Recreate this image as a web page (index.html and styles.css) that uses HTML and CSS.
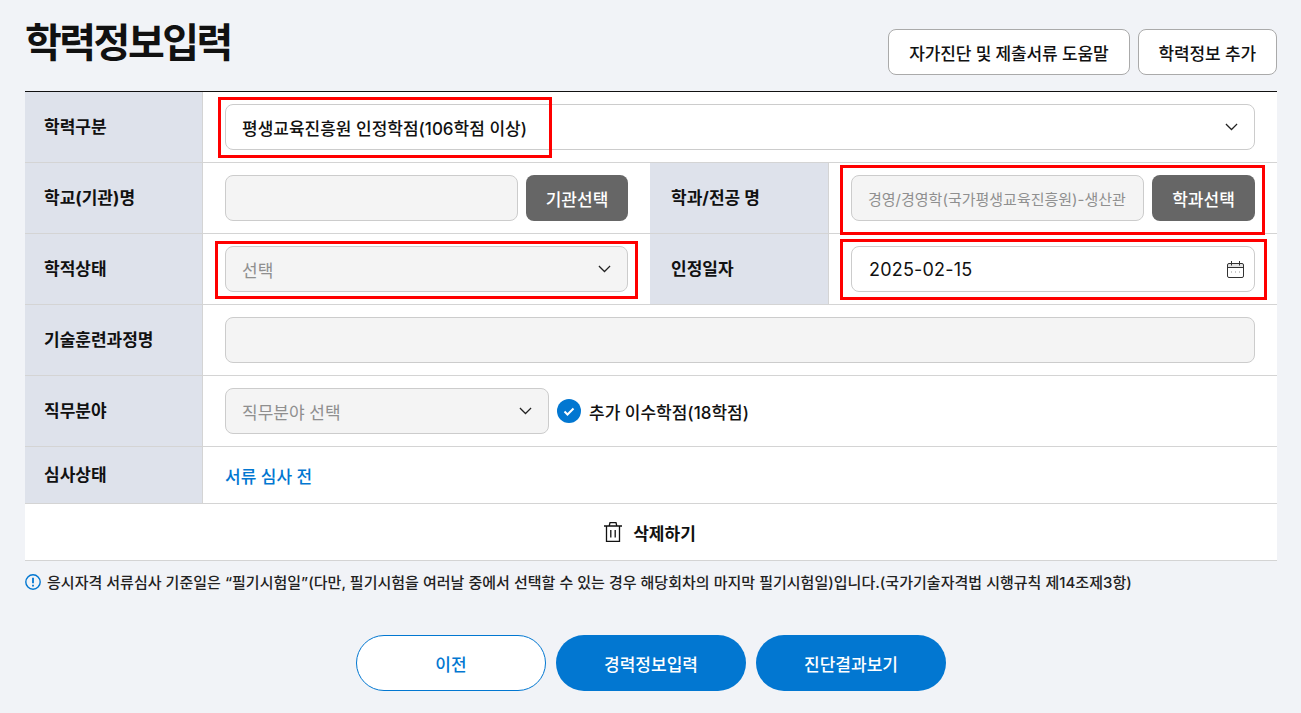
FILE: index.html
```html
<!DOCTYPE html>
<html lang="ko">
<head>
<meta charset="utf-8">
<title>학력정보입력</title>
<link rel="stylesheet" href="styles.css">
</head>
<body>
<main class="page">
  <header class="head">
    <h1 class="title">학력정보입력</h1>
    <div class="head-btns">
      <button class="btn-line">자가진단 및 제출서류 도움말</button>
      <button class="btn-line">학력정보 추가</button>
    </div>
  </header>

  <section class="table">
    <div class="row row-a">
      <div class="th">학력구분</div>
      <div class="td td-wide">
        <div class="field select white flex1 dark">평생교육진흥원 인정학점(106학점 이상)
          <svg class="chev" viewBox="0 0 14 8"><path d="M1 1l6 6 6-6"/></svg>
        </div>
        <span class="mark mark-1"></span>
      </div>
    </div>
    <div class="row row-b">
      <div class="th">학교(기관)명</div>
      <div class="td td-half">
        <div class="field half"></div>
        <button class="btn-dark">기관선택</button>
      </div>
      <div class="th th2">학과/전공 명</div>
      <div class="td">
        <div class="field half muted nowrap">경영/경영학(국가평생교육진흥원)-생산관</div>
        <button class="btn-dark">학과선택</button>
        <span class="mark mark-2"></span>
      </div>
    </div>
    <div class="row row-b">
      <div class="th">학적상태</div>
      <div class="td td-half">
        <div class="field select flex1 muted">선택
          <svg class="chev" viewBox="0 0 14 8"><path d="M1 1l6 6 6-6"/></svg>
        </div>
        <span class="mark mark-3"></span>
      </div>
      <div class="th th2">인정일자</div>
      <div class="td">
        <div class="field select white flex1 date">2025-02-15
          <svg class="cal" viewBox="0 0 17 17"><rect class="cal-band" x="0.5" y="2.500" width="16" height="4"/><rect x="0.5" y="2.500" width="16" height="14" rx="1.500"/><path d="M0.500 6.500h16M4.500 0v4.500M12.500 0v4.500"/><path class="dots" d="M4 11h1M8 11h1M12 11h1"/></svg>
        </div>
        <span class="mark mark-4"></span>
      </div>
    </div>
    <div class="row row-a">
      <div class="th">기술훈련과정명</div>
      <div class="td td-wide"><div class="field flex1"></div></div>
    </div>
    <div class="row row-a">
      <div class="th">직무분야</div>
      <div class="td td-wide">
        <div class="field select muted job">직무분야 선택
          <svg class="chev" viewBox="0 0 14 8"><path d="M1 1l6 6 6-6"/></svg>
        </div>
        <div class="check">
          <svg class="check-ic" viewBox="0 0 24 24"><circle cx="12" cy="12" r="12"/><path d="M7.500 12.500l3 3 6-6"/></svg>
          <span>추가 이수학점(18학점)</span>
        </div>
      </div>
    </div>
    <div class="row row-s">
      <div class="th">심사상태</div>
      <div class="td td-wide"><span class="status">서류 심사 전</span></div>
    </div>
    <div class="del">
      <svg class="trash" viewBox="0 0 18 20"><path d="M0 4h18M2.500 4v15.400h13V4M5.200 4L6 .7h6L12.800 4M6.800 8v7.500M11.200 8v7.500"/></svg>
      <span>삭제하기</span>
    </div>
  </section>

  <p class="note">
    <svg class="info" viewBox="0 0 16 16"><circle cx="8" cy="8" r="7.200"/><path d="M8 3.800v5.400M8 10.800v1.600"/></svg>
    <span>응시자격 서류심사 기준일은 “필기시험일”(다만, 필기시험을 여러날 중에서 선택할 수 있는 경우 해당회차의 마지막 필기시험일)입니다.(국가기술자격법 시행규칙 제14조제3항)</span>
  </p>

  <nav class="foot">
    <button class="pill outline">이전</button>
    <button class="pill solid">경력정보입력</button>
    <button class="pill solid">진단결과보기</button>
  </nav>
</main>
</body>
</html>
```
FILE: styles.css
```css
* { box-sizing: border-box; }
html, body { margin: 0; height: 100%; }
body {
  background: #f1f3f7;
  color: #111;
  font-family: Inter, "Noto Sans CJK KR", "Noto Sans", sans-serif;
  font-size: 17px;
  overflow: hidden;
}
button { font-family: inherit; cursor: pointer; }
.page { width: 1252px; margin-left: 25px; }

.head {
  height: 91px;
  display: flex;
  justify-content: space-between;
  align-items: flex-start;
}
.title {
  margin: 15px 0 0;
  font-size: 40px;
  line-height: 56px;
  font-weight: 700;
  letter-spacing: -2.500px;
  color: #111;
}
.head-btns { display: flex; gap: 8px; padding-top: 29px; }
.btn-line {
  height: 46px;
  padding: 0 20px;
  border: 1px solid #aaa;
  border-radius: 8px;
  background: #fff;
  color: #111;
  font-size: 17px;
  font-weight: 500;
  letter-spacing: -0.130px;
}

.table { background: #fff; border-top: 1px solid #111; }
.row { display: flex; border-bottom: 1px solid #d4d4d4; }
.row-a, .row-b { height: 71px; }
.row-s { height: 57px; }
.th {
  width: 178px;
  flex: none;
  display: flex;
  align-items: center;
  padding-left: 19px;
  padding-bottom: 3px;
  background: #dee2eb;
  border-right: 1px solid #d4d4d4;
  font-size: 17px;
  font-weight: 700;
  color: #111;
}
.th2 { width: 179px; padding-left: 21px; }
.td {
  flex: 1;
  min-width: 0;
  position: relative;
  display: flex;
  align-items: center;
  gap: 8px;
  padding: 0 22px;
}
.td-half { flex: none; width: 447px; }
.flex1 { flex: 1; min-width: 0; }
.half { flex: none; width: 293px; }
.field {
  height: 46px;
  display: flex;
  align-items: center;
  padding: 0 16px;
  background: #f4f4f4;
  border: 1px solid #ccc;
  border-radius: 8px;
  font-size: 17px;
}
.white { background: #fff; }
.dark { color: #111; font-weight: 500; }
.muted { color: #8f8f8f; }
.nowrap { white-space: nowrap; overflow: hidden; font-size: 15px; }
.select { justify-content: space-between; }
.date { padding-left: 17px; font-size: 18px; font-weight: 400; color: #111; letter-spacing: 0.200px; }
.job { width: 324px; flex: none; }
.chev { width: 13px; height: 7.500px; fill: none; stroke: #222; stroke-width: 1.300; flex: none; }
.cal { width: 17px; height: 17px; fill: none; stroke: #333; stroke-width: 1; margin-right: -6px; flex: none; }
.cal-band { fill: #e4e4e4; stroke: none; }
.cal .dots { stroke: #999; }
.btn-dark {
  flex: 1;
  height: 46px;
  border: 0;
  border-radius: 8px;
  background: #666;
  color: #fff;
  font-size: 17px;
  font-weight: 500;
}
.check { display: flex; align-items: center; gap: 8px; font-size: 17px; font-weight: 500; }
.check-ic { width: 24px; height: 24px; }
.check-ic circle { fill: #0277d1; }
.check-ic path { fill: none; stroke: #fff; stroke-width: 2; }
.status { color: #0277d1; font-size: 17px; font-weight: 500; }

.mark { position: absolute; border: 3px solid #f00; pointer-events: none; }
.mark-1 { left: 15px; top: 5px; width: 334px; height: 61px; }
.mark-2 { left: 11px; top: 2px; width: 425px; height: 70px; }
.mark-3 { left: 12px; top: 7px; width: 423px; height: 58px; }
.mark-4 { left: 11px; top: 5px; width: 427px; height: 61px; }

.del {
  height: 57px;
  display: flex;
  align-items: center;
  justify-content: center;
  gap: 11px;
  padding-right: 2px;
  border-bottom: 1px solid #d4d4d4;
  font-size: 17px;
  font-weight: 700;
}
.trash { width: 18px; height: 20px; fill: none; stroke: #111; stroke-width: 1.300; }

.note {
  margin: 10px 0 0;
  display: flex;
  align-items: center;
  gap: 6px;
  font-size: 15px;
  font-weight: 500;
  color: #222;
  white-space: nowrap;
  letter-spacing: 0.020px;
}
.info { width: 16px; height: 16px; fill: none; stroke: #0277d1; stroke-width: 1.400; flex: none; }
.info path { stroke-width: 1.800; }

.foot {
  margin-top: 43px;
  display: flex;
  justify-content: center;
  gap: 10px;
}
.pill {
  width: 190px;
  height: 56px;
  border-radius: 28px;
  font-size: 17px;
  font-weight: 500;
}
.outline { background: #fff; border: 1px solid #0277d1; color: #0277d1; }
.solid { background: #0277d1; border: 0; color: #fff; }
```
